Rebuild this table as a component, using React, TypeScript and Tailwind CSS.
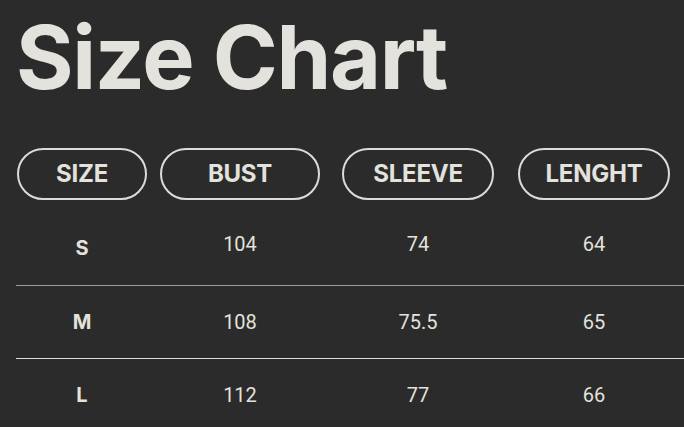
const columns = [
  { label: "SIZE", width: "w-[130px]", gap: "ml-0" },
  { label: "BUST", width: "w-[160px]", gap: "ml-[13px]" },
  { label: "SLEEVE", width: "w-[152px]", gap: "ml-[22px]" },
  { label: "LENGHT", width: "w-[152px]", gap: "ml-[24px]" },
];

const rows = [
  { size: "S", values: ["104", "74", "64"], line: "border-[#9d9d9b]", pad: "pb-[10px]", sizePad: "pt-[8px]" },
  { size: "M", values: ["108", "75.5", "65"], line: "border-[#deddd8]", pad: "", sizePad: "" },
  { size: "L", values: ["112", "77", "66"], line: "border-transparent", pad: "", sizePad: "" },
];

export default function App() {
  return (
    <div className="w-[684px] h-[427px] overflow-hidden bg-[#2b2b2b] text-[#e3e2dd] font-['Inter',sans-serif]">
      <h1 className="pl-[16px] pt-[9px] text-[88px] leading-[96px] font-bold tracking-[-0.015em]">
        Size Chart
      </h1>

      <div className="mt-[43px] pl-[17px] flex">
        {columns.map((c) => (
          <div
            key={c.label}
            className={`${c.width} ${c.gap} h-[52px] shrink-0 rounded-full border-2 border-[#dcdbd6] flex items-center justify-center text-[24px] font-bold tracking-[-0.01em]`}
          >
            {c.label}
          </div>
        ))}
      </div>

      <div className="ml-[16px] mt-[13px]">
        {rows.map((r) => (
          <div key={r.size} className={`h-[73px] border-b ${r.line} ${r.pad} flex items-center pl-[1px]`}>
            <div className={`w-[130px] shrink-0 text-center text-[20px] font-bold ${r.sizePad}`}>{r.size}</div>
            {r.values.map((v, i) => (
              <div
                key={v}
                className={`${columns[i + 1].width} ${columns[i + 1].gap} shrink-0 text-center text-[20px] font-['Roboto',sans-serif]`}
              >
                {v}
              </div>
            ))}
          </div>
        ))}
      </div>
    </div>
  );
}
